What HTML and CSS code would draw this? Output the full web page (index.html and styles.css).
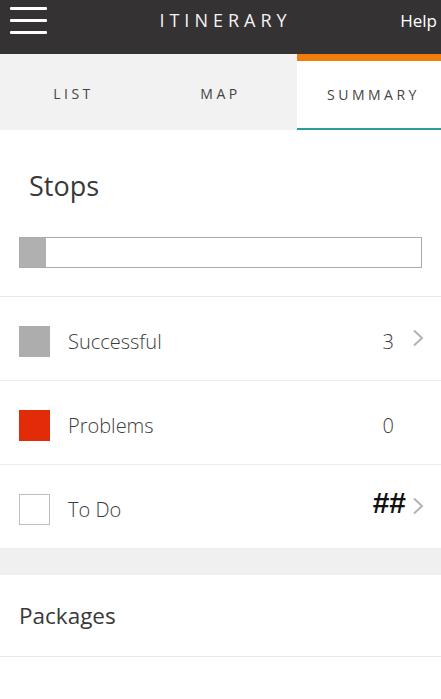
FILE: index.html
```html
<!DOCTYPE html>
<html lang="en">
<head>
    <meta charset="UTF-8">
    <meta name="viewport" content="width=device-width, initial-scale=1.0">
    <title>Itinerary Summary</title>
    <link rel="stylesheet" href="styles.css">
</head>
<body>
    <div class="topbar">
        <div class="menu-button">
            <span></span><span></span><span></span>
        </div>
        <div class="topbar-title">ITINERARY</div>
        <div class="help">Help</div>
    </div>

    <div class="tabs">
        <div class="tab">LIST</div>
        <div class="tab">MAP</div>
        <div class="tab active">SUMMARY</div>
    </div>

    <div class="section stops">
        <div class="section-title stops-title">Stops</div>
        <div class="progress">
            <div class="progress-fill" style="width: 6.5%"></div>
        </div>
    </div>

    <div class="row">
        <div class="swatch swatch-success"></div>
        <div class="row-label">Successful</div>
        <div class="row-count">3</div>
        <svg class="chevron" width="12" height="18" viewBox="0 0 12 18"><path d="M2 1.5 L10 9 L2 16.5" fill="none" stroke="#b3b3b3" stroke-width="2"/></svg>
    </div>
    <div class="row">
        <div class="swatch swatch-problem"></div>
        <div class="row-label">Problems</div>
        <div class="row-count">0</div>
        <div class="chevron-space"></div>
    </div>
    <div class="row">
        <div class="swatch swatch-todo"></div>
        <div class="row-label">To Do</div>
        <div class="row-count hash">##</div>
        <svg class="chevron" width="12" height="18" viewBox="0 0 12 18"><path d="M2 1.5 L10 9 L2 16.5" fill="none" stroke="#b3b3b3" stroke-width="2"/></svg>
    </div>

    <div class="spacer"></div>

    <div class="section packages">
        <div class="section-title">Packages</div>
    </div>
    <div class="row package-row">
        <div class="row-label">To deliver and drop off</div>
        <div class="row-count hash">##</div>
        <div class="chevron-space"></div>
    </div>
</body>
</html>
```

FILE: styles.css
```css
body {
    margin: 0;
    background-color: #ffffff;
    font-family: 'Open Sans', 'Noto Sans', sans-serif;
    color: #3d3d3d;
    overflow: hidden;
}
.topbar {
    height: 54px;
    background-color: #343233;
    display: grid;
    grid-template-columns: 1fr auto 1fr;
    align-items: center;
    padding: 0 4px 14px 10px;
    box-sizing: border-box;
    color: #ffffff;
}
.menu-button {
    width: 37px;
    display: flex;
    flex-direction: column;
    gap: 9px;
}
.menu-button span {
    display: block;
    height: 3px;
    background-color: #ffffff;
    border-radius: 1px;
}
.topbar-title {
    font-size: 18px;
    letter-spacing: 5px;
    color: #f4f4f4;
    margin-left: 4px;
}
.help {
    font-size: 17px;
    justify-self: end;
}
.tabs {
    display: grid;
    grid-template-columns: 1fr 1fr 1fr;
    height: 76px;
    background-color: #f2f2f2;
}
.tab {
    display: flex;
    align-items: center;
    justify-content: center;
    font-size: 14px;
    letter-spacing: 3.5px;
    color: #444444;
    padding-top: 2px;
}
.tab.active {
    background-color: #ffffff;
    border-top: 7px solid #f07d0c;
    border-bottom: 2px solid #2a9d95;
    padding-top: 0;
    padding-left: 9px;
    margin-left: 3px;
}
.section {
    border-bottom: 1px solid #e8e8e8;
}
.stops {
    height: 166px;
    padding: 0 19px 0 19px;
}
.section-title {
    font-size: 22.5px;
    color: #383838;
}
.stops-title {
    font-size: 27px;
    padding: 37px 0 0 10px;
    line-height: 38px;
}
.progress {
    margin-top: 32px;
    height: 29px;
    border: 1px solid #aaaaaa;
    display: flex;
}
.progress-fill {
    background-color: #b0b0b0;
}
.row {
    height: 83px;
    border-bottom: 1px solid #ececec;
    display: flex;
    align-items: center;
    padding: 0 17px 0 19px;
}
.swatch {
    width: 31px;
    height: 31px;
    box-sizing: border-box;
    margin-top: 6px;
}
.swatch-success {
    background-color: #adadad;
}
.swatch-problem {
    background-color: #e22b08;
}
.swatch-todo {
    border: 1px solid #bdbdbd;
}
.row-label {
    flex: 1;
    font-size: 20px;
    font-weight: 300;
    margin-left: 18px;
    margin-top: 6px;
}
.row-count {
    font-size: 20px;
    font-weight: 300;
    margin-top: 6px;
    margin-right: 12px;
}
.hash {
    font-family: 'Liberation Sans', sans-serif;
    font-weight: bold;
    font-size: 30px;
    line-height: 30px;
    color: #111111;
    margin-top: -8px;
    margin-right: 0;
}
.chevron {
    margin-left: 6px;
    margin-top: -2px;
}
.chevron-space {
    width: 12px;
    margin-left: 6px;
}
.spacer {
    height: 26px;
    background-color: #f0f0f0;
}
.packages {
    height: 81px;
    display: flex;
    align-items: center;
    padding: 0 19px;
}
.package-row .row-label {
    margin-left: 0;
    margin-top: 76px;
}
.package-row .hash {
    margin-top: 46px;
}
```
